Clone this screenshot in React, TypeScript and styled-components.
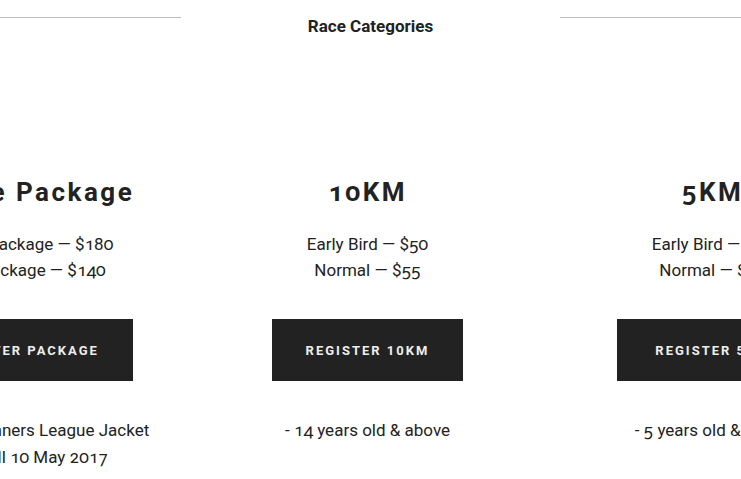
import styled, { createGlobalStyle } from "styled-components";

const GlobalStyle = createGlobalStyle`
  body {
    margin: 0;
    background: #fff;
    color: #222;
    font-family: Roboto, "Liberation Sans", sans-serif;
    font-variant-numeric: oldstyle-nums;
    overflow: hidden;
  }
`;

const categories = [
  {
    name: "Bundle Package",
    prices: ["Bundle Package — $180", "Early Package — $140"],
    button: "Register Package",
    notes: ["- Includes Runners League Jacket", "- Valid till 10 May 2017"],
  },
  {
    name: "10KM",
    prices: ["Early Bird — $50", "Normal — $55"],
    button: "Register 10KM",
    notes: ["- 14 years old & above"],
  },
  {
    name: "5KM",
    prices: ["Early Bird — $40", "Normal — $45"],
    button: "Register 5KM",
    notes: ["- 5 years old & above"],
  },
];

export default function App() {
  return (
    <>
      <GlobalStyle />
      <Header>
        <Rule />
        <Title>Race Categories</Title>
        <Rule />
      </Header>
      <Columns>
        {categories.map((c) => (
          <Column key={c.name}>
            <Name>{c.name}</Name>
            <Prices>
              {c.prices.map((p) => (
                <div key={p}>{p}</div>
              ))}
            </Prices>
            <Button>{c.button}</Button>
            <Notes>
              {c.notes.map((n) => (
                <div key={n}>{n}</div>
              ))}
            </Notes>
          </Column>
        ))}
      </Columns>
    </>
  );
}

const Header = styled.div`
  display: flex;
  align-items: flex-start;
`;

const Rule = styled.div`
  flex: 1;
  height: 1px;
  margin-top: 17px;
  background-color: #bdbdbd;
`;

const Title = styled.h2`
  margin: 0;
  padding: 16px 127px 0;
  font-size: 17px;
  line-height: 20px;
  font-weight: 700;
  color: #222;
`;

// wider than the window on purpose: the outer columns are cut at the edges
const Columns = styled.div`
  display: grid;
  grid-template-columns: repeat(3, 345px);
  width: 1035px;
  margin: 140px 0 0 -150px;
`;

const Column = styled.div`
  display: flex;
  flex-direction: column;
  align-items: center;
  text-align: center;
`;

const Name = styled.h3`
  margin: 0;
  font-size: 26px;
  line-height: 32px;
  font-weight: 700;
  letter-spacing: 2.5px;
  white-space: nowrap;
`;

const Prices = styled.div`
  margin-top: 23px;
  font-size: 17px;
  line-height: 26px;
  white-space: nowrap;
`;

const Button = styled.button`
  margin-top: 36px;
  min-width: 191px;
  height: 62px;
  padding: 0 34px;
  border: none;
  background-color: #222;
  color: #eee;
  font-family: inherit;
  font-size: 13px;
  font-weight: 700;
  letter-spacing: 2px;
  text-transform: uppercase;
  white-space: nowrap;
`;

const Notes = styled.div`
  margin-top: 36px;
  font-size: 17px;
  line-height: 27px;
  white-space: nowrap;
`;
